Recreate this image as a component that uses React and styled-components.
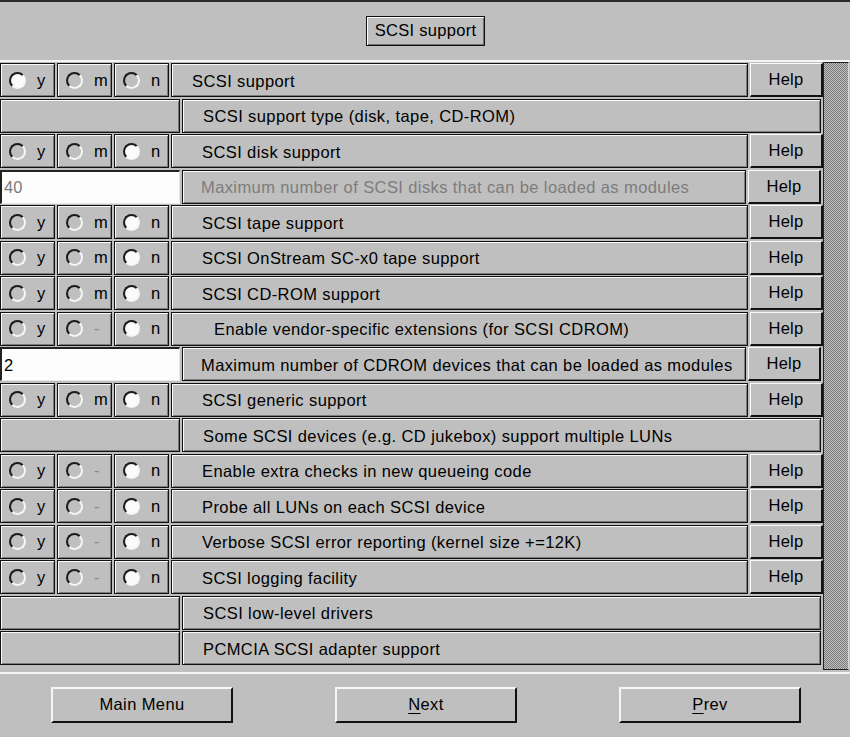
import React from 'react';
import styled, { createGlobalStyle } from 'styled-components';

const GlobalStyle = createGlobalStyle`
  html, body {
    margin: 0;
    padding: 0;
    background: #bfbfbf;
  }
  body {
    font-family: "Liberation Sans", Helvetica, Arial, sans-serif;
    font-size: 16.5px;
    color: #000;
  }
`;

const Window = styled.div`
  width: 850px;
  height: 737px;
  box-sizing: border-box;
  border-top: 2px solid #2a2a2a;
  background: #bfbfbf;
  display: flex;
  flex-direction: column;
  overflow: hidden;
`;

const Header = styled.div`
  height: 58px;
  display: flex;
  align-items: center;
  justify-content: center;
`;

const TitleButton = styled.div`
  width: 119px;
  height: 30px;
  box-sizing: border-box;
  border: 1px solid #111;
  box-shadow: inset 1px 1px #fff, inset -1px -1px #6e6e6e;
  display: flex;
  align-items: center;
  justify-content: center;
  letter-spacing: 0.3px;
  margin-left: 1px;
  margin-top: -1px;
`;

const Separator = styled.div`
  height: 2px;
  background: #f4f4f4;
  margin-top: ${p => p.$top || 0}px;
`;

const Body = styled.div`
  height: 609px;
  display: flex;
  gap: 2px;
`;

const Rows = styled.div`
  width: 821px;
  padding-top: 1px;
  display: flex;
  flex-direction: column;
  gap: 1.5px;
`;

const Row = styled.div`
  height: 34px;
  display: flex;
  gap: 2px;
`;

const Cell = styled.div`
  width: ${p => p.$w}px;
  flex: none;
  box-sizing: border-box;
  border: 1px solid #111;
  box-shadow: inset 1px 1px #fafafa, inset -1px -1px #7c7c7c;
  display: flex;
  align-items: center;
  padding-top: 2px;
`;

const RadioCell = styled(Cell)`
  padding-left: 8px;
  padding-top: 0;
  gap: 11px;
`;

const Circle = styled.span`
  width: 17px;
  height: 17px;
  box-sizing: border-box;
  border-radius: 50%;
  border: 2px solid;
  border-color: #1a1a1a #f6f6f6 #f6f6f6 #1a1a1a;
  background: ${p => (p.$on ? '#fbfbfb' : '#bfbfbf')};
  flex: none;
`;

const RadioLetter = styled.span`
  color: ${p => (p.$dim ? '#8a8a8a' : '#000')};
  line-height: 1;
`;

const Label = styled(Cell)`
  padding-left: ${p => p.$pad}px;
  color: ${p => (p.$dim ? '#7c7c7c' : '#000')};
  white-space: nowrap;
  letter-spacing: 0.4px;
`;

const HelpButton = styled.div`
  width: 73px;
  flex: none;
  box-sizing: border-box;
  border-top: 1px solid #fafafa;
  border-left: 1px solid #fafafa;
  border-right: 2px solid #111;
  border-bottom: 2px solid #111;
  display: flex;
  align-items: center;
  justify-content: center;
  letter-spacing: 0.3px;
`;

const Entry = styled.div`
  width: 180px;
  flex: none;
  box-sizing: border-box;
  background: #fdfdfd;
  border-top: 2px solid #222;
  border-left: 2px solid #222;
  border-right: 1px solid #e8e8e8;
  border-bottom: 1px solid #e8e8e8;
  display: flex;
  align-items: center;
  padding: 1px 0 0 2px;
  color: ${p => (p.$dim ? '#7c7c7c' : '#000')};
`;

const Scrollbar = styled.div`
  width: 26px;
  height: 608px;
  box-sizing: border-box;
  border: 1px solid #222;
  border-right-color: #d8d8d8;
  background-color: #a0a0a0;
  background-image: repeating-conic-gradient(#787878 0 25%, #c2c2c2 0 50%);
  background-size: 2px 2px;
`;

const Footer = styled.div`
  flex: 1;
  display: flex;
  align-items: flex-start;
  padding: 13px 0 0 51px;
  gap: 102px;
`;

const NavButton = styled.div`
  width: 182px;
  height: 36px;
  box-sizing: border-box;
  border-top: 2px solid #f6f6f6;
  border-left: 2px solid #f6f6f6;
  border-right: 2px solid #111;
  border-bottom: 2px solid #111;
  display: flex;
  align-items: center;
  justify-content: center;
  letter-spacing: 0.4px;
  padding-bottom: 1px;
  u {
    text-decoration-thickness: 1px;
    text-underline-offset: 3px;
  }
`;

const rows = [
  { type: 'tri', label: 'SCSI support', pad: 20, sel: 'y' },
  { type: 'menu', label: 'SCSI support type (disk, tape, CD-ROM)' },
  { type: 'tri', label: 'SCSI disk support', pad: 30, sel: 'n' },
  { type: 'int', value: '40', label: 'Maximum number of SCSI disks that can be loaded as modules', dim: true },
  { type: 'tri', label: 'SCSI tape support', pad: 30, sel: 'n' },
  { type: 'tri', label: 'SCSI OnStream SC-x0 tape support', pad: 30, sel: 'n' },
  { type: 'tri', label: 'SCSI CD-ROM support', pad: 30, sel: 'n' },
  { type: 'tri', label: 'Enable vendor-specific extensions (for SCSI CDROM)', pad: 42, sel: 'n', noMod: true },
  { type: 'int', value: '2', label: 'Maximum number of CDROM devices that can be loaded as modules' },
  { type: 'tri', label: 'SCSI generic support', pad: 30, sel: 'n' },
  { type: 'menu', label: 'Some SCSI devices (e.g. CD jukebox) support multiple LUNs' },
  { type: 'tri', label: 'Enable extra checks in new queueing code', pad: 30, sel: 'n', noMod: true },
  { type: 'tri', label: 'Probe all LUNs on each SCSI device', pad: 30, sel: 'n', noMod: true },
  { type: 'tri', label: 'Verbose SCSI error reporting (kernel size +=12K)', pad: 30, sel: 'n', noMod: true },
  { type: 'tri', label: 'SCSI logging facility', pad: 30, sel: 'n', noMod: true },
  { type: 'menu', label: 'SCSI low-level drivers' },
  { type: 'menu', label: 'PCMCIA SCSI adapter support' },
];

const Radio = ({ letter, on, dim }) => (
  <RadioCell $w={55}>
    <Circle $on={on} />
    <RadioLetter $dim={dim}>{letter}</RadioLetter>
  </RadioCell>
);

const ConfigRow = ({ row }) => {
  if (row.type === 'menu') {
    return (
      <Row>
        <Cell $w={180} />
        <Label $w={639} $pad={20}>{row.label}</Label>
      </Row>
    );
  }
  if (row.type === 'int') {
    return (
      <Row>
        <Entry $dim={row.dim}>{row.value}</Entry>
        <Label $w={564} $pad={18} $dim={row.dim}>{row.label}</Label>
        <HelpButton>Help</HelpButton>
      </Row>
    );
  }
  return (
    <Row>
      <Radio letter="y" on={row.sel === 'y'} />
      <Radio letter={row.noMod ? '-' : 'm'} on={row.sel === 'm'} dim={row.noMod} />
      <Radio letter="n" on={row.sel === 'n'} />
      <Label $w={577} $pad={row.pad}>{row.label}</Label>
      <HelpButton>Help</HelpButton>
    </Row>
  );
};

export default function App() {
  return (
    <>
      <GlobalStyle />
      <Window>
        <Header>
          <TitleButton>SCSI support</TitleButton>
        </Header>
        <Separator />
        <Body>
          <Rows>
            {rows.map((row, i) => (
              <ConfigRow row={row} key={i} />
            ))}
          </Rows>
          <Scrollbar />
        </Body>
        <Separator $top={1} />
        <Footer>
          <NavButton>Main Menu</NavButton>
          <NavButton><span><u>N</u>ext</span></NavButton>
          <NavButton><span><u>P</u>rev</span></NavButton>
        </Footer>
      </Window>
    </>
  );
}
